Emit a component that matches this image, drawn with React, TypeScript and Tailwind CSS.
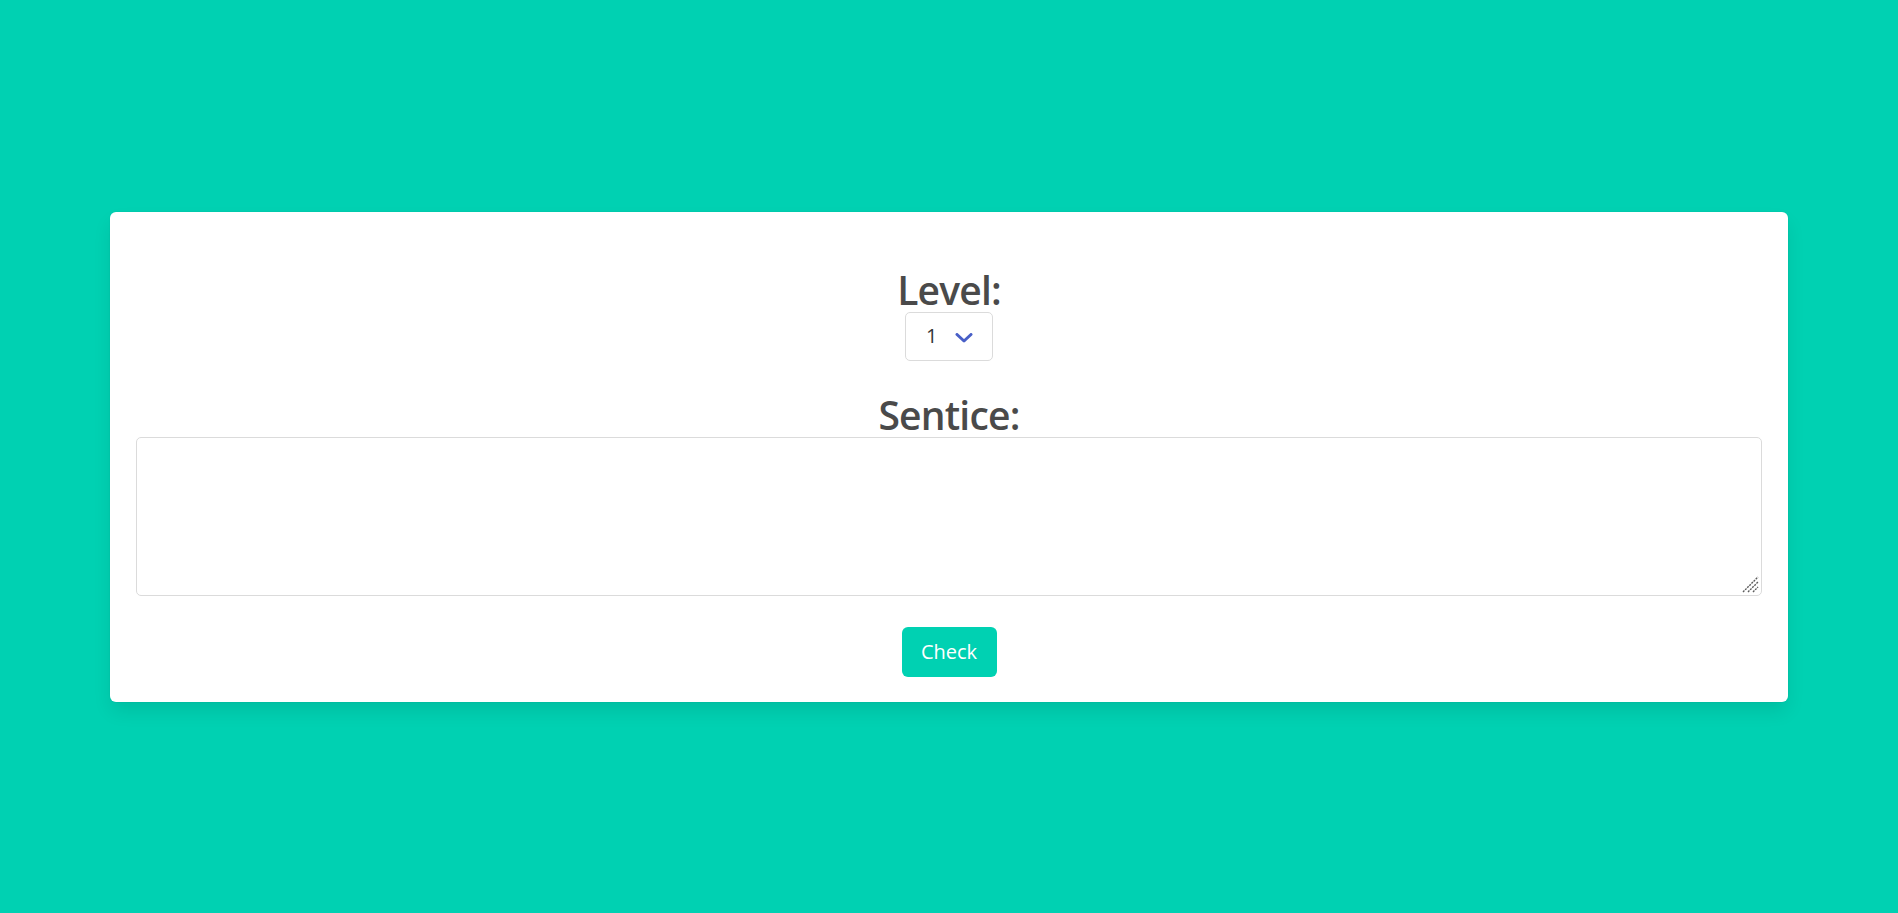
import React from "react";

export default function App() {
  return (
    <div
      className="min-h-screen bg-[#00d1b2] flex items-center px-[110px]"
      style={{ fontFamily: '"Open Sans", "Noto Sans", sans-serif' }}
    >
      <div className="w-full bg-white rounded-[6px] shadow-[0_10px_19px_-2px_rgba(10,10,10,0.1),0_0_0_1px_rgba(10,10,10,0.02)] px-[26px] pt-[56px] pb-[25px] flex flex-col items-center text-[#4a4a4a]">
        <label className="text-[39px] leading-[44px] font-semibold tracking-[-0.8px]">Level:</label>
        <div className="relative w-[88px] h-[49px] border border-[#dbdbdb] rounded-[5px] flex items-center pl-[20px]">
          <span className="text-[20px] leading-none text-[#363636]">1</span>
          <svg
            className="absolute right-[19px] top-[20px]"
            width="18"
            height="10"
            viewBox="0 0 18 10"
            fill="none"
          >
            <path d="M2 1.5 L9 8 L16 1.5" stroke="#485fc7" strokeWidth="3" strokeLinecap="round" strokeLinejoin="round" />
          </svg>
        </div>
        <label className="mt-[32px] text-[39px] leading-[44px] font-semibold tracking-[-0.8px]">Sentice:</label>
        <div className="relative w-full">
          <textarea className="block w-full h-[159px] border border-[#dbdbdb] rounded-[5px] outline-none p-3 text-[19px] resize-none" />
          <svg
            className="absolute right-[3px] bottom-[3px] pointer-events-none"
            width="17"
            height="17"
            viewBox="0 0 17 17"
            fill="none"
          >
            <path d="M1 16 L16 1 M6 16 L16 6 M11 16 L16 11" stroke="#5c5c5c" strokeWidth="1.4" strokeDasharray="2 1" />
          </svg>
        </div>
        <button className="mt-[31px] w-[95px] h-[50px] bg-[#00d1b2] text-white text-[20px] rounded-[6px]">
          Check
        </button>
      </div>
    </div>
  );
}
